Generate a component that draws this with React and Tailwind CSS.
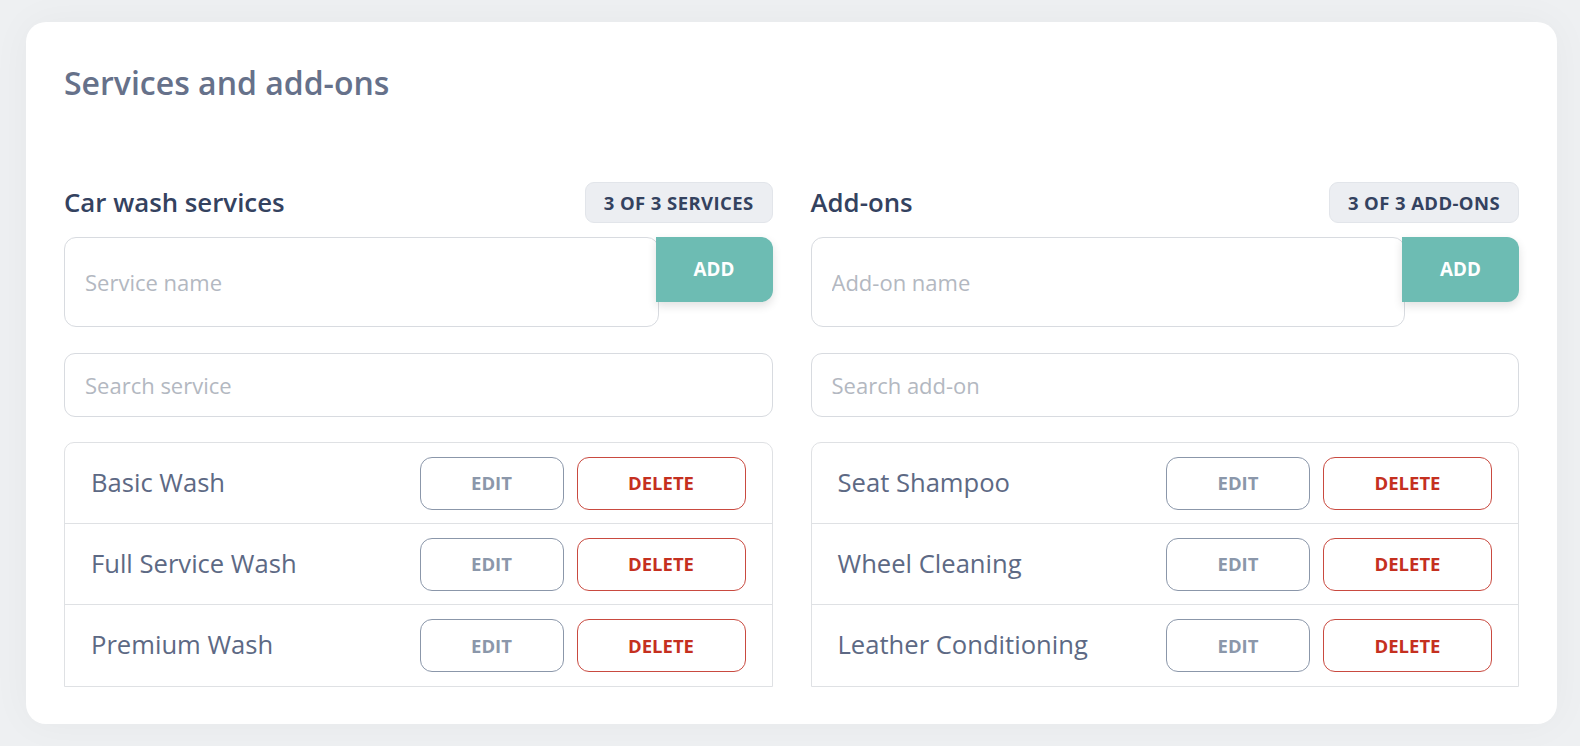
import React from "react";

const services = ["Basic Wash", "Full Service Wash", "Premium Wash"];
const addons = ["Seat Shampoo", "Wheel Cleaning", "Leather Conditioning"];

function Section({ title, badge, placeholder, searchPlaceholder, items }) {
  return (
    <div className="flex flex-col">
      <div className="flex items-center justify-between mt-[79px]">
        <h3 className="text-[25.8px] font-semibold text-[#34425f] leading-none">{title}</h3>
        <span className="h-[41px] px-[18px] flex items-center rounded-[9px] bg-[#eceef2] border border-[#e2e5ea] text-[18.5px] font-bold tracking-[0.4px] text-[#34425f]">
          {badge}
        </span>
      </div>

      <div className="flex mt-[14px]">
        <input
          placeholder={placeholder}
          className="flex-1 h-[90px] rounded-[12px] border border-[#d8dbe0] px-[20px] text-[22px] text-[#5f6b85] placeholder:text-[#b3b8c1] outline-none"
        />
        <button className="relative z-10 -ml-[3px] w-[117px] h-[65px] rounded-r-[12px] bg-[#6dbcb3] text-white text-[18.8px] font-bold shadow-[0_4px_10px_rgba(0,0,0,0.12)]">
          ADD
        </button>
      </div>

      <input
        placeholder={searchPlaceholder}
        className="mt-[26px] h-[64px] rounded-[11px] border border-[#d8dbe0] px-[20px] text-[22px] text-[#5f6b85] placeholder:text-[#b3b8c1] outline-none"
      />

      <div className="mt-[25px] border border-[#dfe1e4] rounded-t-[10px]">
        {items.map((name, i) => (
          <div
            key={name}
            className={"h-[81px] flex items-center justify-between pl-[26px] pr-[26px] " + (i < items.length - 1 ? "border-b border-[#dfe1e4]" : "")}
          >
            <span className="text-[25.6px] text-[#5d6984]">{name}</span>
            <div className="flex gap-[13px]">
              <button className="w-[144px] h-[53px] rounded-[12px] border border-[#8b97aa] text-[#8b97aa] text-[18.5px] font-bold">
                EDIT
              </button>
              <button className="w-[169px] h-[53px] rounded-[12px] border border-[#c94a40] text-[#c5301f] text-[18.5px] font-bold">
                DELETE
              </button>
            </div>
          </div>
        ))}
      </div>
    </div>
  );
}

export default function App() {
  return (
    <div className="min-h-screen bg-[#eef0f2] pt-[22px] pl-[26px]" style={{ fontFamily: '"Open Sans", "Noto Sans", sans-serif' }}>
      <div className="w-[1531px] rounded-[20px] bg-white shadow-[0_0_40px_rgba(0,0,0,0.04)] px-[38px] pt-[41px] pb-[37px]">
        <h2 className="text-[32px] font-semibold text-[#66718a] leading-[40px]">Services and add-ons</h2>
        <div className="grid grid-cols-2 gap-[38px]">
          <Section
            title="Car wash services"
            badge="3 OF 3 SERVICES"
            placeholder="Service name"
            searchPlaceholder="Search service"
            items={services}
          />
          <Section
            title="Add-ons"
            badge="3 OF 3 ADD-ONS"
            placeholder="Add-on name"
            searchPlaceholder="Search add-on"
            items={addons}
          />
        </div>
      </div>
    </div>
  );
}
